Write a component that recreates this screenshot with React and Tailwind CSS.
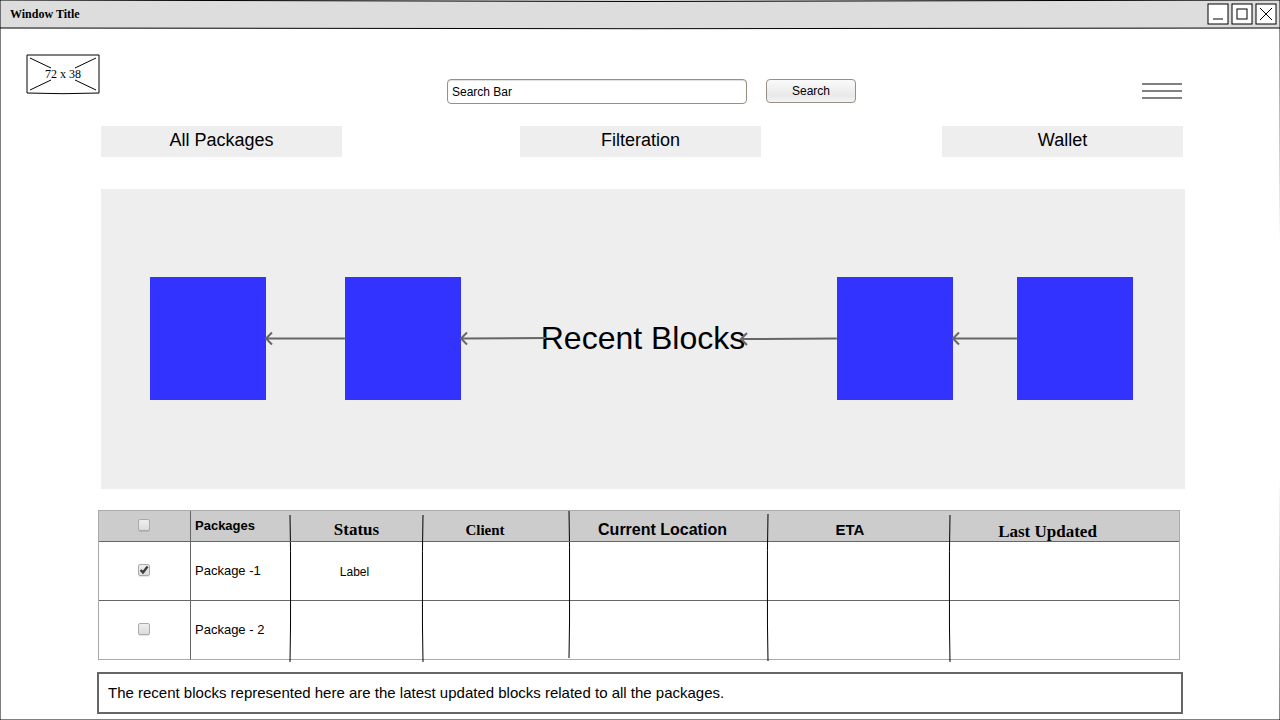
import React from "react";

const SANS = "font-['Liberation_Sans',Arial,sans-serif]";
const SERIF = "font-['Liberation_Serif','Times_New_Roman',serif]";

function WindowFrame() {
  return (
    <svg
      className="pointer-events-none absolute inset-0 h-full w-full"
      viewBox="0 0 1280 720"
      preserveAspectRatio="none"
      fill="none"
      stroke="#000"
      aria-hidden="true"
    >
      <path d="M0 0 Q640 3 1280 0" />
      <path d="M0 28 Q640 29.4 1280 28" />
      <path d="M0 0 V720 H1280" />
      <path d="M1280 0 Q1281.5 360 1280 720" />
    </svg>
  );
}

function WindowButton({ label, children }) {
  return (
    <button type="button" aria-label={label} className="h-[22px] w-[22px]">
      <svg width="22" height="22" viewBox="0 0 22 22" fill="none" stroke="#000">
        <rect x="1" y="1" width="20" height="20" fill="#fff" />
        {children}
      </svg>
    </button>
  );
}

function TitleBar() {
  return (
    <div className="flex h-[28px] items-start justify-between bg-[#ddd] pt-[3px] pr-[3px] pl-[10px]">
      <h1 className={`${SERIF} text-[12px] leading-[22px] font-bold`}>Window Title</h1>
      <div className="flex gap-[2px]">
        <WindowButton label="Minimize">
          <path d="M6 16 H16" />
        </WindowButton>
        <WindowButton label="Maximize">
          <rect x="6" y="6" width="10" height="10" />
        </WindowButton>
        <WindowButton label="Close">
          <path d="M5 5 L17 17 M17 5 L5 17" />
        </WindowButton>
      </div>
    </div>
  );
}

function Logo() {
  return (
    <svg width="74" height="42" viewBox="0 0 74 42" fill="none" stroke="#000" className="self-start">
      <path d="M1 1 H73 V39 Q37 40.4 1 39 Z" />
      <path d="M4 4 L25 14 M70 4 L49 14 M25 26 L4 36 M49 26 L70 36" />
      <text
        x="37"
        y="24"
        textAnchor="middle"
        fill="#000"
        stroke="none"
        className={`${SERIF} text-[12px]`}
      >
        72 x 38
      </text>
    </svg>
  );
}

function Header() {
  return (
    <header className="grid h-[50px] grid-cols-[421fr_auto_326fr] items-start pr-[98px] pl-[26px]">
      <Logo />
      <form className="flex gap-[19px] pt-[25px]" onSubmit={(e) => e.preventDefault()}>
        <input
          type="text"
          aria-label="Search packages"
          defaultValue="Search Bar"
          className="h-[25px] w-[300px] rounded-[4px] border border-[#998f82] bg-white px-[4px] text-[12px] shadow-[inset_0_1px_1px_#ddd] outline-none"
        />
        <button
          type="submit"
          className="h-[24px] w-[90px] rounded-[4px] border border-[#998f82] bg-linear-to-b from-[#fafafa] via-[#e9e9e9] via-70% to-[#f4f4f4] text-[12px] leading-[22px]"
        >
          Search
        </button>
      </form>
      <button
        type="button"
        aria-label="Menu"
        className="mt-[29px] flex w-[40px] flex-col gap-[5px] justify-self-end"
      >
        <span className="h-[2px] w-full bg-[#808080]" />
        <span className="h-[2px] w-full bg-[#808080]" />
        <span className="h-[2px] w-full bg-[#808080]" />
      </button>
    </header>
  );
}

function Nav() {
  return (
    <nav className="mt-[22px] mr-[97px] ml-[101px] grid grid-cols-[419fr_422fr_241px]">
      {["All Packages", "Filteration", "Wallet"].map((name) => (
        <button
          key={name}
          type="button"
          className="h-[31px] w-[241px] bg-[#eee] pb-[2px] text-[18px] leading-[29px]"
        >
          {name}
        </button>
      ))}
    </nav>
  );
}

function Block() {
  return <div className="h-[123px] w-[116px] shrink-0 bg-[#33f]" />;
}

function Arrow({ className, startY = 8.5, endY = 8.5 }) {
  return (
    <svg
      className={`relative h-[17px] min-w-0 overflow-visible ${className}`}
      fill="none"
      stroke="#666"
      strokeWidth="2"
      aria-hidden="true"
    >
      <line x1="1" y1={startY} x2="100%" y2={endY} />
      <path d={`M6 ${startY - 6} L0 ${startY} L6 ${startY + 6}`} />
    </svg>
  );
}

function RecentBlocks() {
  return (
    <section className="mt-[32px] mr-[95px] ml-[101px] flex h-[300px] items-center bg-[#eee] pr-[52px] pb-[1px] pl-[49px]">
      <Block />
      <Arrow className="w-0 grow-79" />
      <Block />
      <Arrow className="-mr-[5px] w-0 grow-85" endY={8} />
      <h2 className="shrink-0 text-[32px] leading-[37px]">Recent Blocks</h2>
      <Arrow className="-ml-[4px] w-0 grow-96" startY={9} />
      <Block />
      <Arrow className="w-0 grow-64" />
      <Block />
    </section>
  );
}

function Tick({ label, checked = false }) {
  return (
    <div className="pr-[2px] pb-[2px]">
      <label className="relative mx-auto block h-[12px] w-[12px]">
        <input
          type="checkbox"
          aria-label={label}
          defaultChecked={checked}
          className="peer block h-[12px] w-[12px] appearance-none rounded-[2px] border border-[#aaa] bg-linear-to-b from-[#eee] to-[#dcdcdc] shadow-[0_1px_0_rgba(0,0,0,0.1)]"
        />
        <svg
          className="pointer-events-none absolute inset-0 hidden peer-checked:block"
          width="12"
          height="12"
          viewBox="0 0 12 12"
          fill="none"
          stroke="#3c3c3c"
          strokeWidth="2.4"
        >
          <path d="M2.6 6 L5 8.4 L9.6 2.6" />
        </svg>
      </label>
    </div>
  );
}

function Divider({ bow, className }) {
  return (
    <svg
      className={`pointer-events-none absolute -right-[2px] h-[147px] w-[4px] ${className}`}
      viewBox="0 0 4 147"
      fill="none"
      stroke="#000"
      aria-hidden="true"
    >
      <path d={`M2 0 Q${2 + bow} 36 ${2 + bow * 0.7} 73 Q${2 + bow} 110 2 147`} />
    </svg>
  );
}

const HEAD = "relative h-[31px] border-b border-[#666] p-0 align-middle leading-[20px] font-bold";
const ROW = "h-[59px] border-b p-0 align-middle text-[13px]";

function PackageRow({ name, status, checked, last }) {
  const line = last ? "border-b-[#aaa]" : "border-b-[#666]";
  return (
    <tr>
      <td className={`${ROW} ${line} border-r border-r-[#666]`}>
        <Tick label={`Select ${name}`} checked={checked} />
      </td>
      <td className={`${ROW} ${line} pl-[4px]`}>{name}</td>
      <td className={`${ROW} ${line}`}>
        <div className="pt-[2px] pr-[4px] text-center text-[12px]">{status}</div>
      </td>
      <td className={`${ROW} ${line}`} />
      <td className={`${ROW} ${line}`} />
      <td className={`${ROW} ${line}`} />
      <td className={`${ROW} ${line}`} />
    </tr>
  );
}

function PackagesTable() {
  return (
    <div className="mt-[21px] mr-[100px] ml-[98px]">
      <table className="w-full table-fixed border-separate border-spacing-0 border border-b-0 border-[#aaa]">
        <colgroup>
          <col className="w-[92px]" />
          <col className="w-[99px]" />
          <col className="w-[133px]" />
          <col className="w-[146px]" />
          <col className="w-[199px]" />
          <col className="w-[182px]" />
          <col className="w-[229px]" />
        </colgroup>
        <thead className="bg-[#ccc]">
          <tr>
            <th className={`${HEAD} border-r`}>
              <Tick label="Select all packages" />
            </th>
            <th className={`${HEAD} text-left text-[13px]`}>
              <div className="pl-[4px]">Packages</div>
              <Divider bow={0.8} className="top-[4px]" />
            </th>
            <th className={`${HEAD} ${SERIF} text-[17px]`}>
              <div className="pt-[8px]">Status</div>
              <Divider bow={-0.8} className="top-[4px]" />
            </th>
            <th className={`${HEAD} ${SERIF} text-[15px]`}>
              <div className="pt-[8px] pr-[22px]">Client</div>
              <Divider bow={0.8} className="top-0" />
            </th>
            <th className={`${HEAD} text-[16px]`}>
              <div className="pt-[8px] pr-[12px]">Current Location</div>
              <Divider bow={-0.8} className="top-[3px]" />
            </th>
            <th className={`${HEAD} text-[15px]`}>
              <div className="pt-[8px] pr-[18px]">ETA</div>
              <Divider bow={-0.8} className="top-[4px]" />
            </th>
            <th className={`${HEAD} ${SERIF} text-[17px]`}>
              <div className="pt-[12px] pr-[34px] leading-[18px]">Last Updated</div>
            </th>
          </tr>
        </thead>
        <tbody>
          <PackageRow name="Package -1" status="Label" checked />
          <PackageRow name="Package - 2" last />
        </tbody>
      </table>
    </div>
  );
}

export default function App() {
  return (
    <div className={`${SANS} relative min-h-screen bg-white text-black`}>
      <TitleBar />
      <main className="pt-[26px] pb-[6px]">
        <Header />
        <Nav />
        <RecentBlocks />
        <PackagesTable />
        <p className="mx-[97px] mt-[12px] border-2 border-[#666] bg-white px-[9px] py-[9px] text-[15px] leading-[20px]">
          The recent blocks represented here are the latest updated blocks related to all the
          packages.
        </p>
      </main>
      <WindowFrame />
    </div>
  );
}
